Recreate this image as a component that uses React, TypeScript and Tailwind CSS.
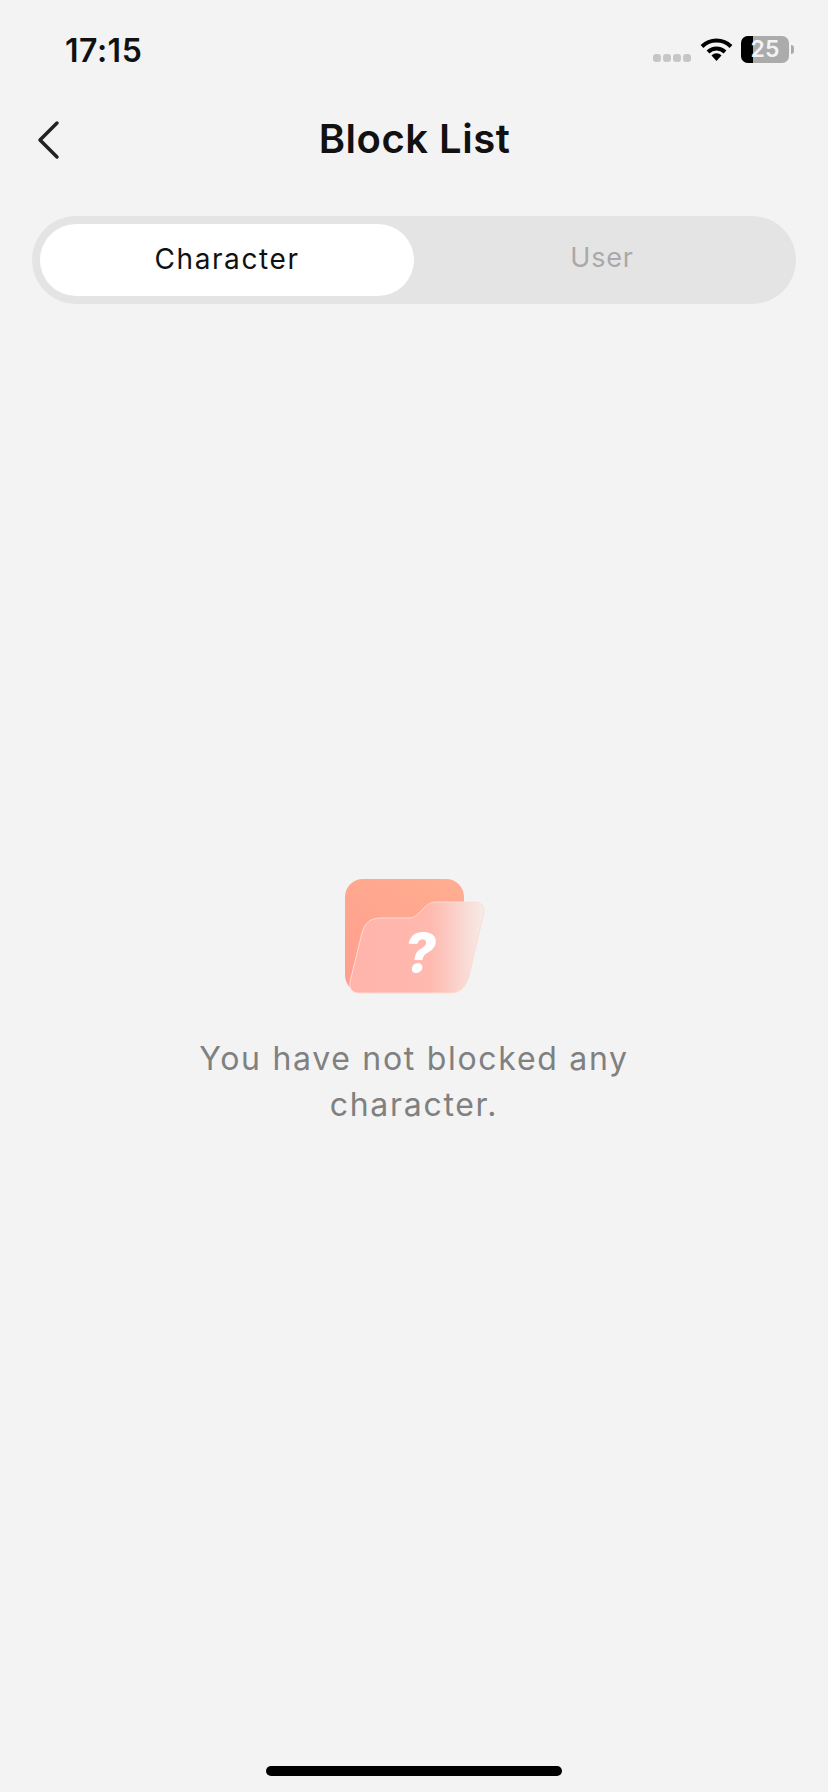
export default function App() {
  return (
    <div className="flex h-[1792px] w-[828px] flex-col overflow-hidden bg-[#f3f3f3] font-['Inter','Liberation_Sans',sans-serif] text-[#111111]">
      <div className="flex h-[100px] shrink-0 items-start justify-between pl-[65px] pr-[34px] pt-[31px]">
        <span className="text-[32px] font-semibold leading-[40px] tracking-[0.5px]">17:15</span>
        <div className="-mt-[1px] flex items-start pt-[6px]">
          <div className="mt-[18px] flex gap-[2px]">
            <i className="h-[8px] w-[8px] rounded-[3px] bg-[#c6c6c6]" />
            <i className="h-[8px] w-[8px] rounded-[3px] bg-[#c6c6c6]" />
            <i className="h-[8px] w-[8px] rounded-[3px] bg-[#c6c6c6]" />
            <i className="h-[8px] w-[8px] rounded-[3px] bg-[#c6c6c6]" />
          </div>
          <svg className="ml-[9px] mt-[1px]" width="33" height="25" viewBox="0 0 32 25">
            <path d="M1.5 9.5C9.5 1.5 22.5 1.5 30.5 9.5" fill="none" stroke="#000" strokeWidth="4" />
            <path d="M7.5 15C12.5 10.3 19.5 10.3 24.5 15" fill="none" stroke="#000" strokeWidth="4" />
            <path d="M11 18.5C14 15.5 18 15.5 21 18.5L16 24Z" fill="#000" />
          </svg>
          <div className="relative ml-[8px] flex h-[27px] w-[48px] overflow-hidden rounded-[7px] bg-[#ababab]">
            <div className="h-full w-[12px] bg-black" />
            <span className="absolute inset-0 text-center text-[23px] font-semibold leading-[27px] text-[#f3f3f3]">25</span>
          </div>
          <div className="ml-[2px] mt-[9px] h-[9px] w-[3px] rounded-r-[3px] bg-[#ababab]" />
        </div>
      </div>

      <div className="relative flex h-[76px] shrink-0 items-center justify-center">
        <svg className="absolute left-[36px] top-[20px]" width="24" height="40" viewBox="0 0 24 40">
          <path d="M21 3L4 20L21 37" fill="none" stroke="#222222" strokeWidth="3.5" strokeLinecap="round" strokeLinejoin="round" />
        </svg>
        <h1 className="pl-[1px] pt-[2px] text-[40px] font-semibold leading-[48px] tracking-[0.5px]">Block List</h1>
      </div>

      <div className="mx-[32px] mt-[40px] flex h-[88px] shrink-0 rounded-[44px] bg-[#e4e4e4] p-[8px]">
        <div className="flex w-[374px] items-center justify-center rounded-[36px] bg-white pb-[3px] text-[28px] tracking-[1.6px] text-[#111111]">Character</div>
        <div className="flex flex-1 items-center justify-center pb-[3px] pl-[2px] text-[27px] tracking-[0.8px] text-[#a9a9a9]">User</div>
      </div>

      <main className="flex flex-1 flex-col items-center pt-[575px]">
        <svg className="ml-[1px]" width="140" height="116" viewBox="0 0 140 116">
          <defs>
            <linearGradient id="back" x1="0.8" y1="0" x2="0.1" y2="1">
              <stop offset="0" stopColor="#ffac90" />
              <stop offset="1" stopColor="#ff9f8f" />
            </linearGradient>
            <linearGradient id="front" x1="0" y1="0" x2="1" y2="0">
              <stop offset="0" stopColor="#ffb4aa" />
              <stop offset="0.6" stopColor="#ffb9af" />
              <stop offset="1" stopColor="#f6ece8" />
            </linearGradient>
          </defs>
          <rect x="0" y="0" width="119" height="114" rx="18" fill="url(#back)" />
          <path
            d="M5 103L17 54C20 44 25 39 36 39H64C69 39 71 37 74 34L80 28C84 24 87 23 92 23H129C136 23 140 27 139 33L124 97C121 108 115 114 106 114H14C7 114 4 109 5 103Z"
            fill="url(#front)"
            stroke="#ffdcd5"
            strokeWidth="1"
          />
          <text x="75" y="93" textAnchor="middle" fontFamily="Inter, sans-serif" fontSize="54" fontWeight="800" fontStyle="italic" fill="#ffffff">?</text>
        </svg>
        <p className="mt-[41px] w-[470px] text-center text-[32px] font-normal leading-[46px] tracking-[1.7px] text-[#808080]">
          You have not blocked any character.
        </p>
      </main>

      <div className="mx-auto mb-[16px] h-[10px] w-[296px] shrink-0 rounded-full bg-black" />
    </div>
  );
}
